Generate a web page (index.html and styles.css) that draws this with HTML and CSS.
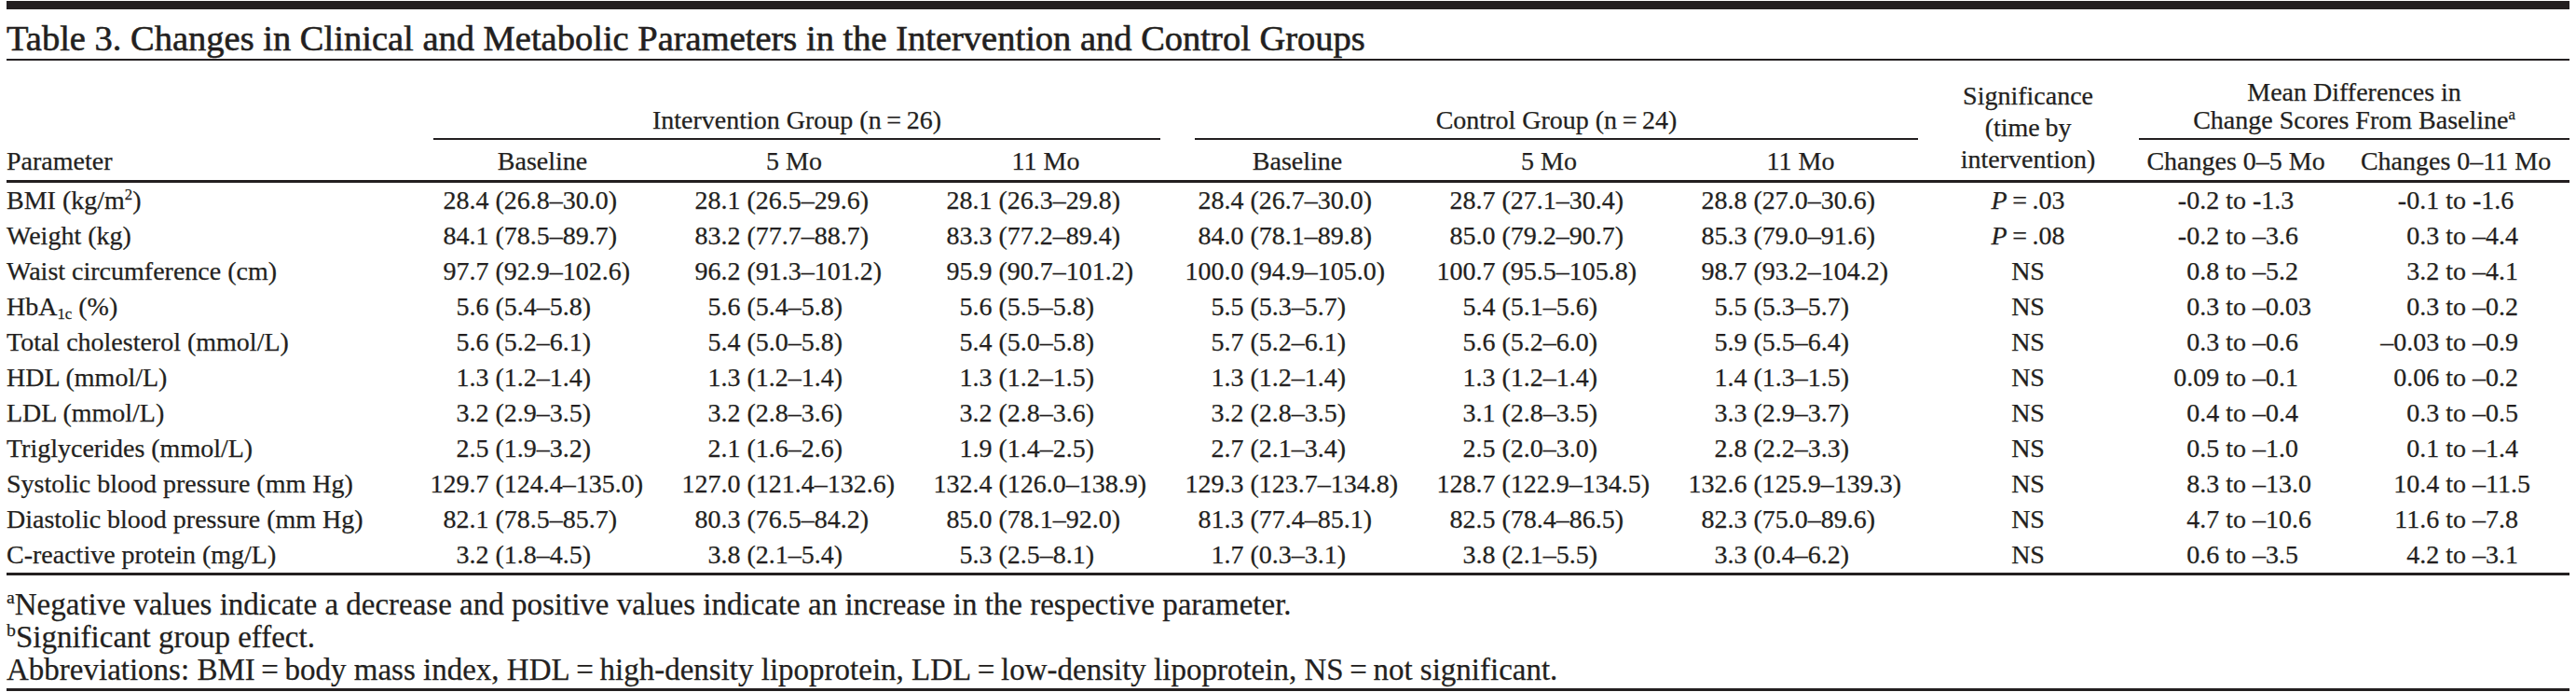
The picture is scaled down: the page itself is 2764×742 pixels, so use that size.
FILE: index.html
```html
<!DOCTYPE html>
<html lang="en">
<head>
<meta charset="utf-8">
<title>Table 3</title>
<link rel="stylesheet" href="styles.css">
</head>
<body>
<div class="page">
  <div class="topbar"></div>
  <h1 class="title">Table 3. Changes in Clinical and Metabolic Parameters in the Intervention and Control Groups</h1>
  <table class="t">
    <colgroup>
      <col class="c-param"><col class="c-val"><col class="c-val"><col class="c-val"><col class="c-val"><col class="c-val"><col class="c-val"><col class="c-sig"><col class="c-ch5"><col class="c-ch11">
    </colgroup>
    <thead>
      <tr class="h1">
        <th rowspan="2" class="param">Parameter</th>
        <th colspan="3" class="grp"><div class="grp-in g-int">Intervention Group (n&thinsp;=&thinsp;26)</div></th>
        <th colspan="3" class="grp"><div class="grp-in g-ctl">Control Group (n&thinsp;=&thinsp;24)</div></th>
        <th rowspan="2" class="sig">Significance<br>(time&thinsp;by<br>intervention)</th>
        <th colspan="2" class="grp"><div class="grp-in g-md">Mean Differences in<br>Change Scores From Baseline<sup>a</sup></div></th>
      </tr>
      <tr class="h2">
        <th>Baseline</th><th>5 Mo</th><th>11 Mo</th>
        <th>Baseline</th><th>5 Mo</th><th>11 Mo</th>
        <th>Changes 0–5 Mo</th><th>Changes 0–11 Mo</th>
      </tr>
    </thead>
    <tbody>
      <tr>
        <td class="p">BMI (kg/m<sup>2</sup>)</td>
        <td class="v"><span class="a">28.4</span><span class="b">(26.8–30.0)</span></td>
        <td class="v"><span class="a">28.1</span><span class="b">(26.5–29.6)</span></td>
        <td class="v"><span class="a">28.1</span><span class="b">(26.3–29.8)</span></td>
        <td class="v"><span class="a">28.4</span><span class="b">(26.7–30.0)</span></td>
        <td class="v"><span class="a">28.7</span><span class="b">(27.1–30.4)</span></td>
        <td class="v"><span class="a">28.8</span><span class="b">(27.0–30.6)</span></td>
        <td class="s"><i>P</i>&thinsp;=&thinsp;.03</td>
        <td class="c"><span class="l">-0.2</span> to <span class="r">-1.3</span></td>
        <td class="c"><span class="l">-0.1</span> to <span class="r">-1.6</span></td>
      </tr>
      <tr>
        <td class="p">Weight (kg)</td>
        <td class="v"><span class="a">84.1</span><span class="b">(78.5–89.7)</span></td>
        <td class="v"><span class="a">83.2</span><span class="b">(77.7–88.7)</span></td>
        <td class="v"><span class="a">83.3</span><span class="b">(77.2–89.4)</span></td>
        <td class="v"><span class="a">84.0</span><span class="b">(78.1–89.8)</span></td>
        <td class="v"><span class="a">85.0</span><span class="b">(79.2–90.7)</span></td>
        <td class="v"><span class="a">85.3</span><span class="b">(79.0–91.6)</span></td>
        <td class="s"><i>P</i>&thinsp;=&thinsp;.08</td>
        <td class="c"><span class="l">-0.2</span> to <span class="r">–3.6</span></td>
        <td class="c"><span class="l">0.3</span> to <span class="r">–4.4</span></td>
      </tr>
      <tr>
        <td class="p">Waist circumference (cm)</td>
        <td class="v"><span class="a">97.7</span><span class="b">(92.9–102.6)</span></td>
        <td class="v"><span class="a">96.2</span><span class="b">(91.3–101.2)</span></td>
        <td class="v"><span class="a">95.9</span><span class="b">(90.7–101.2)</span></td>
        <td class="v"><span class="a">100.0</span><span class="b">(94.9–105.0)</span></td>
        <td class="v"><span class="a">100.7</span><span class="b">(95.5–105.8)</span></td>
        <td class="v"><span class="a">98.7</span><span class="b">(93.2–104.2)</span></td>
        <td class="s">NS</td>
        <td class="c"><span class="l">0.8</span> to <span class="r">–5.2</span></td>
        <td class="c"><span class="l">3.2</span> to <span class="r">–4.1</span></td>
      </tr>
      <tr>
        <td class="p">HbA<sub>1c</sub> (%)</td>
        <td class="v"><span class="a">5.6</span><span class="b">(5.4–5.8)</span></td>
        <td class="v"><span class="a">5.6</span><span class="b">(5.4–5.8)</span></td>
        <td class="v"><span class="a">5.6</span><span class="b">(5.5–5.8)</span></td>
        <td class="v"><span class="a">5.5</span><span class="b">(5.3–5.7)</span></td>
        <td class="v"><span class="a">5.4</span><span class="b">(5.1–5.6)</span></td>
        <td class="v"><span class="a">5.5</span><span class="b">(5.3–5.7)</span></td>
        <td class="s">NS</td>
        <td class="c"><span class="l">0.3</span> to <span class="r">–0.03</span></td>
        <td class="c"><span class="l">0.3</span> to <span class="r">–0.2</span></td>
      </tr>
      <tr>
        <td class="p">Total cholesterol (mmol/L)</td>
        <td class="v"><span class="a">5.6</span><span class="b">(5.2–6.1)</span></td>
        <td class="v"><span class="a">5.4</span><span class="b">(5.0–5.8)</span></td>
        <td class="v"><span class="a">5.4</span><span class="b">(5.0–5.8)</span></td>
        <td class="v"><span class="a">5.7</span><span class="b">(5.2–6.1)</span></td>
        <td class="v"><span class="a">5.6</span><span class="b">(5.2–6.0)</span></td>
        <td class="v"><span class="a">5.9</span><span class="b">(5.5–6.4)</span></td>
        <td class="s">NS</td>
        <td class="c"><span class="l">0.3</span> to <span class="r">–0.6</span></td>
        <td class="c"><span class="l">–0.03</span> to <span class="r">–0.9</span></td>
      </tr>
      <tr>
        <td class="p">HDL (mmol/L)</td>
        <td class="v"><span class="a">1.3</span><span class="b">(1.2–1.4)</span></td>
        <td class="v"><span class="a">1.3</span><span class="b">(1.2–1.4)</span></td>
        <td class="v"><span class="a">1.3</span><span class="b">(1.2–1.5)</span></td>
        <td class="v"><span class="a">1.3</span><span class="b">(1.2–1.4)</span></td>
        <td class="v"><span class="a">1.3</span><span class="b">(1.2–1.4)</span></td>
        <td class="v"><span class="a">1.4</span><span class="b">(1.3–1.5)</span></td>
        <td class="s">NS</td>
        <td class="c"><span class="l">0.09</span> to <span class="r">–0.1</span></td>
        <td class="c"><span class="l">0.06</span> to <span class="r">–0.2</span></td>
      </tr>
      <tr>
        <td class="p">LDL (mmol/L)</td>
        <td class="v"><span class="a">3.2</span><span class="b">(2.9–3.5)</span></td>
        <td class="v"><span class="a">3.2</span><span class="b">(2.8–3.6)</span></td>
        <td class="v"><span class="a">3.2</span><span class="b">(2.8–3.6)</span></td>
        <td class="v"><span class="a">3.2</span><span class="b">(2.8–3.5)</span></td>
        <td class="v"><span class="a">3.1</span><span class="b">(2.8–3.5)</span></td>
        <td class="v"><span class="a">3.3</span><span class="b">(2.9–3.7)</span></td>
        <td class="s">NS</td>
        <td class="c"><span class="l">0.4</span> to <span class="r">–0.4</span></td>
        <td class="c"><span class="l">0.3</span> to <span class="r">–0.5</span></td>
      </tr>
      <tr>
        <td class="p">Triglycerides (mmol/L)</td>
        <td class="v"><span class="a">2.5</span><span class="b">(1.9–3.2)</span></td>
        <td class="v"><span class="a">2.1</span><span class="b">(1.6–2.6)</span></td>
        <td class="v"><span class="a">1.9</span><span class="b">(1.4–2.5)</span></td>
        <td class="v"><span class="a">2.7</span><span class="b">(2.1–3.4)</span></td>
        <td class="v"><span class="a">2.5</span><span class="b">(2.0–3.0)</span></td>
        <td class="v"><span class="a">2.8</span><span class="b">(2.2–3.3)</span></td>
        <td class="s">NS</td>
        <td class="c"><span class="l">0.5</span> to <span class="r">–1.0</span></td>
        <td class="c"><span class="l">0.1</span> to <span class="r">–1.4</span></td>
      </tr>
      <tr>
        <td class="p">Systolic blood pressure (mm Hg)</td>
        <td class="v"><span class="a">129.7</span><span class="b">(124.4–135.0)</span></td>
        <td class="v"><span class="a">127.0</span><span class="b">(121.4–132.6)</span></td>
        <td class="v"><span class="a">132.4</span><span class="b">(126.0–138.9)</span></td>
        <td class="v"><span class="a">129.3</span><span class="b">(123.7–134.8)</span></td>
        <td class="v"><span class="a">128.7</span><span class="b">(122.9–134.5)</span></td>
        <td class="v"><span class="a">132.6</span><span class="b">(125.9–139.3)</span></td>
        <td class="s">NS</td>
        <td class="c"><span class="l">8.3</span> to <span class="r">–13.0</span></td>
        <td class="c"><span class="l">10.4</span> to <span class="r">–11.5</span></td>
      </tr>
      <tr>
        <td class="p">Diastolic blood pressure (mm Hg)</td>
        <td class="v"><span class="a">82.1</span><span class="b">(78.5–85.7)</span></td>
        <td class="v"><span class="a">80.3</span><span class="b">(76.5–84.2)</span></td>
        <td class="v"><span class="a">85.0</span><span class="b">(78.1–92.0)</span></td>
        <td class="v"><span class="a">81.3</span><span class="b">(77.4–85.1)</span></td>
        <td class="v"><span class="a">82.5</span><span class="b">(78.4–86.5)</span></td>
        <td class="v"><span class="a">82.3</span><span class="b">(75.0–89.6)</span></td>
        <td class="s">NS</td>
        <td class="c"><span class="l">4.7</span> to <span class="r">–10.6</span></td>
        <td class="c"><span class="l">11.6</span> to <span class="r">–7.8</span></td>
      </tr>
      <tr>
        <td class="p">C-reactive protein (mg/L)</td>
        <td class="v"><span class="a">3.2</span><span class="b">(1.8–4.5)</span></td>
        <td class="v"><span class="a">3.8</span><span class="b">(2.1–5.4)</span></td>
        <td class="v"><span class="a">5.3</span><span class="b">(2.5–8.1)</span></td>
        <td class="v"><span class="a">1.7</span><span class="b">(0.3–3.1)</span></td>
        <td class="v"><span class="a">3.8</span><span class="b">(2.1–5.5)</span></td>
        <td class="v"><span class="a">3.3</span><span class="b">(0.4–6.2)</span></td>
        <td class="s">NS</td>
        <td class="c"><span class="l">0.6</span> to <span class="r">–3.5</span></td>
        <td class="c"><span class="l">4.2</span> to <span class="r">–3.1</span></td>
      </tr>
    </tbody>
  </table>
  <div class="notes">
    <p><sup>a</sup>Negative values indicate a decrease and positive values indicate an increase in the respective parameter.</p>
    <p><sup>b</sup>Significant group effect.</p>
    <p>Abbreviations: BMI&thinsp;=&thinsp;body mass index, HDL&thinsp;=&thinsp;high-density lipoprotein, LDL&thinsp;=&thinsp;low-density lipoprotein, NS&thinsp;=&thinsp;not significant.</p>
  </div>
</div>
</body>
</html>
```

FILE: styles.css
```css
html, body {
  margin: 0;
  padding: 0;
  background: #ffffff;
}

body {
  color: #231f20;
  font-family: "Liberation Serif", "Times New Roman", serif;
  -webkit-text-stroke: 0.25px #231f20;
}

.page {
  width: 2750px;
  padding: 1px 7px 0;
}

.topbar {
  height: 9px;
  background: #231f20;
}

.title {
  margin: 11px 0 0;
  padding-bottom: 2px;
  font-size: 38.5px;
  line-height: 40px;
  font-weight: normal;
  white-space: nowrap;
  -webkit-text-stroke: 0.6px #231f20;
  border-bottom: 2px solid #231f20;
}

.t {
  width: 2750px;
  table-layout: fixed;
  border-collapse: collapse;
  font-size: 28px;
}

.c-param { width: 440px; }
.c-val { width: 270px; }
.c-sig { width: 218px; }
.c-ch5 { width: 228px; }
.c-ch11 { width: 244px; }

.t th,
.t td {
  padding: 0;
  font-weight: normal;
  white-space: nowrap;
}

.t thead {
  border-bottom: 3px solid #231f20;
}

.t tbody {
  border-bottom: 3px solid #231f20;
}

.h1 {
  height: 85px;
}

.h2 {
  height: 44px;
}

.t thead th {
  vertical-align: bottom;
  line-height: 30px;
  text-align: center;
}

.h2 th {
  padding-bottom: 5px;
}

.t thead th.param {
  text-align: left;
  padding-bottom: 5px;
}

.t thead th.sig {
  line-height: 34px;
  padding-bottom: 5px;
}

.grp-in {
  padding-bottom: 4px;
  border-bottom: 2px solid #231f20;
}

.g-int {
  margin: 0 12px 0 18px;
}

.g-ctl {
  margin: 0 9px 0 25px;
}

.g-md {
  margin: 0 0 0 10px;
}

.t tbody td {
  line-height: 38px;
  height: 38px;
  text-align: center;
}

.t tbody td.p {
  text-align: left;
}

.v .a {
  display: inline-block;
  width: 70px;
  padding-right: 7px;
  box-sizing: border-box;
  text-align: right;
}

.v .b {
  display: inline-block;
  width: 171px;
  text-align: left;
}

.c .l {
  display: inline-block;
  width: 64px;
  text-align: right;
}

.c .r {
  display: inline-block;
  width: 64px;
  text-align: left;
}

sup,
sub {
  font-size: 0.6em;
  line-height: 0;
}

sup {
  vertical-align: 0.6em;
}

sub {
  vertical-align: -0.25em;
}

.notes {
  margin-top: 14px;
  padding-bottom: 2px;
  border-bottom: 3px solid #231f20;
  font-size: 33px;
  line-height: 35px;
}

.notes p {
  margin: 0;
  white-space: nowrap;
}
```
